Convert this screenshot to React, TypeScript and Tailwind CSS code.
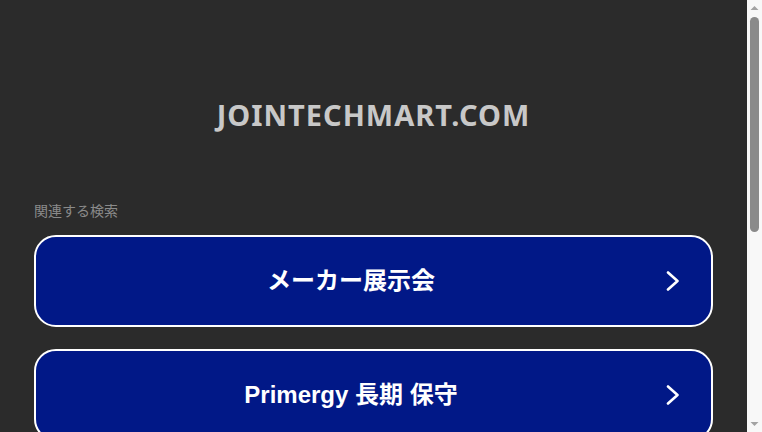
const searches = ["メーカー展示会", "Primergy 長期 保守"];

function Chevron() {
  return (
    <svg width="14" height="20" viewBox="0 0 14 20" className="shrink-0 mr-[31px]" fill="none">
      <path d="M2 1.5 L11.5 10 L2 18.5" stroke="white" strokeWidth="2.6" strokeLinecap="round" strokeLinejoin="round" />
    </svg>
  );
}

function Scrollbar() {
  return (
    <div className="flex w-[15px] shrink-0 flex-col items-center bg-[#f8f8f8]">
      <svg width="15" height="15" viewBox="0 0 15 15" className="shrink-0">
        <path d="M3.5 10 L7.5 6 L11.5 10 Z" fill="#a3a3a3" />
      </svg>
      <div className="mt-[2px] h-[215px] w-[9px] rounded-full bg-[#8a8a8a]" />
      <div className="flex-1" />
      <svg width="15" height="15" viewBox="0 0 15 15" className="shrink-0">
        <path d="M3.5 5 L7.5 9 L11.5 5 Z" fill="#a3a3a3" />
      </svg>
    </div>
  );
}

export default function App() {
  return (
    <div className="flex h-[432px] overflow-hidden bg-[#2b2b2b]">
      <div className="min-w-0 flex-1 px-[34px]" style={{ fontFamily: '"Noto Sans", "Noto Sans CJK JP", sans-serif' }}>
        <h1 className="pt-[96px] text-center text-[29px] leading-[38px] font-bold tracking-[1px] text-[#c8c8c8]">
          JOINTECHMART.COM
        </h1>

        <p className="mt-[67px] text-[14px] leading-[18px] text-[#8a8a8a]" style={{ fontFamily: '"Noto Sans CJK JP", sans-serif' }}>
          関連する検索
        </p>

        <div className="mt-[16px] flex flex-col gap-[22px]">
          {searches.map((s) => (
            <a
              key={s}
              href="#"
              className="flex h-[92px] shrink-0 items-center rounded-[22px] border-2 border-white bg-[#011887]"
            >
              <span
                className="flex-1 text-center text-[24px] font-bold text-white"
                style={{ fontFamily: '"Liberation Sans", "Noto Sans CJK JP", sans-serif' }}
              >
                {s}
              </span>
              <Chevron />
            </a>
          ))}
        </div>
      </div>
      <Scrollbar />
    </div>
  );
}
